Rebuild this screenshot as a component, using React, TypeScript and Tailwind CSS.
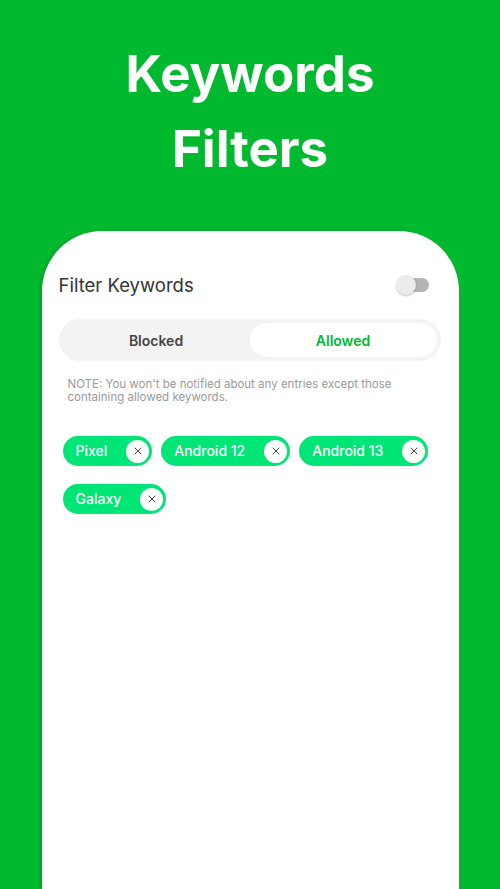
import { X } from 'lucide-react'

const keywords = ['Pixel', 'Android 12', 'Android 13', 'Galaxy']

function Chip({ label }: { label: string }) {
  return (
    <div className="flex h-[30px] items-center rounded-full bg-[#00e676] pl-[13px] pr-[3px]">
      <span className="text-[14px] font-medium leading-none text-white">{label}</span>
      <span className="ml-[19px] flex h-[23px] w-[23px] items-center justify-center rounded-full bg-white">
        <X className="h-[12px] w-[12px] text-[#444]" strokeWidth={2} />
      </span>
    </div>
  )
}

export default function App() {
  return (
    <div
      className="flex min-h-[889px] flex-col items-center overflow-hidden bg-[#00b92e]"
      style={{ fontFamily: 'Inter, "Noto Sans", sans-serif' }}
    >
      <h1 className="pt-[36px] text-center text-[51px] font-bold leading-[75px] text-white">
        Keywords
        <br />
        Filters
      </h1>

      <div className="mt-[45px] flex w-[417px] flex-1 flex-col rounded-t-[60px] bg-white pl-[17px] pr-[18px] pt-[41px] shadow-[-2px_0_3px_rgba(0,80,20,0.25)]">
        <div className="flex items-center justify-between">
          <span className="text-[18.5px] leading-[26px] text-[#333]">Filter Keywords</span>
          <div className="relative mr-[12px] h-[14px] w-[33px]">
            <div className="absolute right-0 top-0 h-[14px] w-[26px] rounded-full bg-[#b5b5b5]" />
            <div className="absolute -top-[3px] left-0 h-[20px] w-[20px] rounded-full bg-[#ececec] shadow-[0_1px_2px_rgba(0,0,0,0.25)]" />
          </div>
        </div>

        <div className="mt-[21px] grid h-[42px] grid-cols-2 rounded-full bg-[#f3f3f3] p-[4px]">
          <div className="flex items-center justify-center text-[14px] font-semibold text-[#444]">Blocked</div>
          <div className="flex items-center justify-center rounded-full bg-white text-[14px] font-semibold text-[#00b92e]">
            Allowed
          </div>
        </div>

        <p className="mt-[17px] px-[9px] text-[11.5px] leading-[13px] text-[#9a9a9a]">
          NOTE: You won't be notified about any entries except those containing allowed keywords.
        </p>

        <div className="mt-[32px] flex flex-wrap gap-x-[9px] gap-y-[18px] pl-[4px]">
          {keywords.map(k => (
            <Chip key={k} label={k} />
          ))}
        </div>
      </div>
    </div>
  )
}
